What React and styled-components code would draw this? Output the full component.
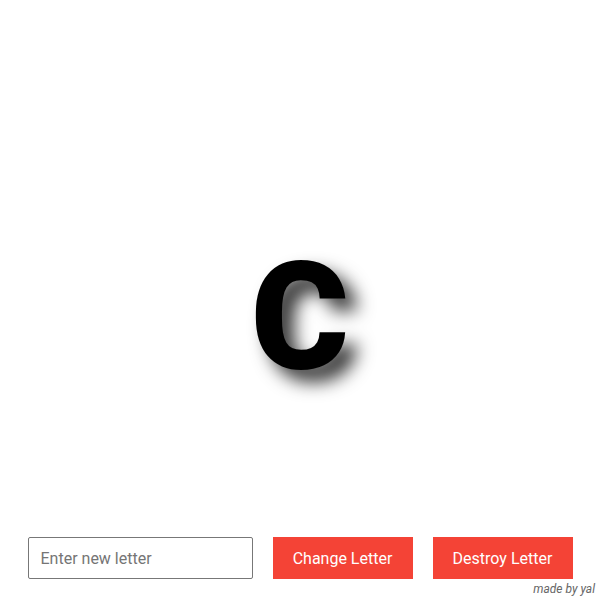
import React, { useState } from 'react';
import styled, { createGlobalStyle } from 'styled-components';

const GlobalStyle = createGlobalStyle`
  html, body, #root {
    margin: 0;
    height: 100%;
  }
  body {
    background: #fff;
    font-family: Roboto, 'Noto Sans', sans-serif;
  }
`;

const Page = styled.div`
  height: 100vh;
  display: flex;
  flex-direction: column;
  box-sizing: border-box;
`;

const Stage = styled.div`
  flex: 1;
  display: flex;
  align-items: center;
  justify-content: center;
  padding-top: 98px;
`;

const Letter = styled.div`
  font-family: Roboto, sans-serif;
  font-weight: 900;
  font-size: 150px;
  line-height: 1;
  color: #000;
  text-transform: uppercase;
  text-shadow: 12px 12px 18px rgba(0, 0, 0, 0.8);
  user-select: none;
`;

const Controls = styled.div`
  display: flex;
  justify-content: center;
  gap: 20px;
  padding: 0 27px;
`;

const Input = styled.input`
  width: 225px;
  height: 42px;
  box-sizing: border-box;
  border: 1px solid #777;
  border-radius: 2px;
  padding: 0 12px;
  font-family: Roboto, sans-serif;
  font-size: 16px;
  color: #333;
  outline: none;
  &::placeholder {
    color: #757575;
  }
`;

const Button = styled.button`
  width: 140px;
  height: 42px;
  border: none;
  border-radius: 0;
  background: #f44336;
  color: #fff;
  font-family: Roboto, sans-serif;
  font-size: 16px;
  cursor: pointer;
`;

const Credit = styled.div`
  text-align: right;
  padding: 3px 5px 4px 0;
  font-family: Roboto, sans-serif;
  font-style: italic;
  font-size: 12px;
  color: #666;
`;

export default function App() {
  const [letter, setLetter] = useState('c');
  const [value, setValue] = useState('');

  return (
    <Page>
      <GlobalStyle />
      <Stage>
        <Letter>{letter}</Letter>
      </Stage>
      <Controls>
        <Input
          placeholder="Enter new letter"
          value={value}
          onChange={e => setValue(e.target.value)}
        />
        <Button onClick={() => value && setLetter(value[0])}>Change Letter</Button>
        <Button onClick={() => setLetter('')}>Destroy Letter</Button>
      </Controls>
      <Credit>made by yal</Credit>
    </Page>
  );
}
